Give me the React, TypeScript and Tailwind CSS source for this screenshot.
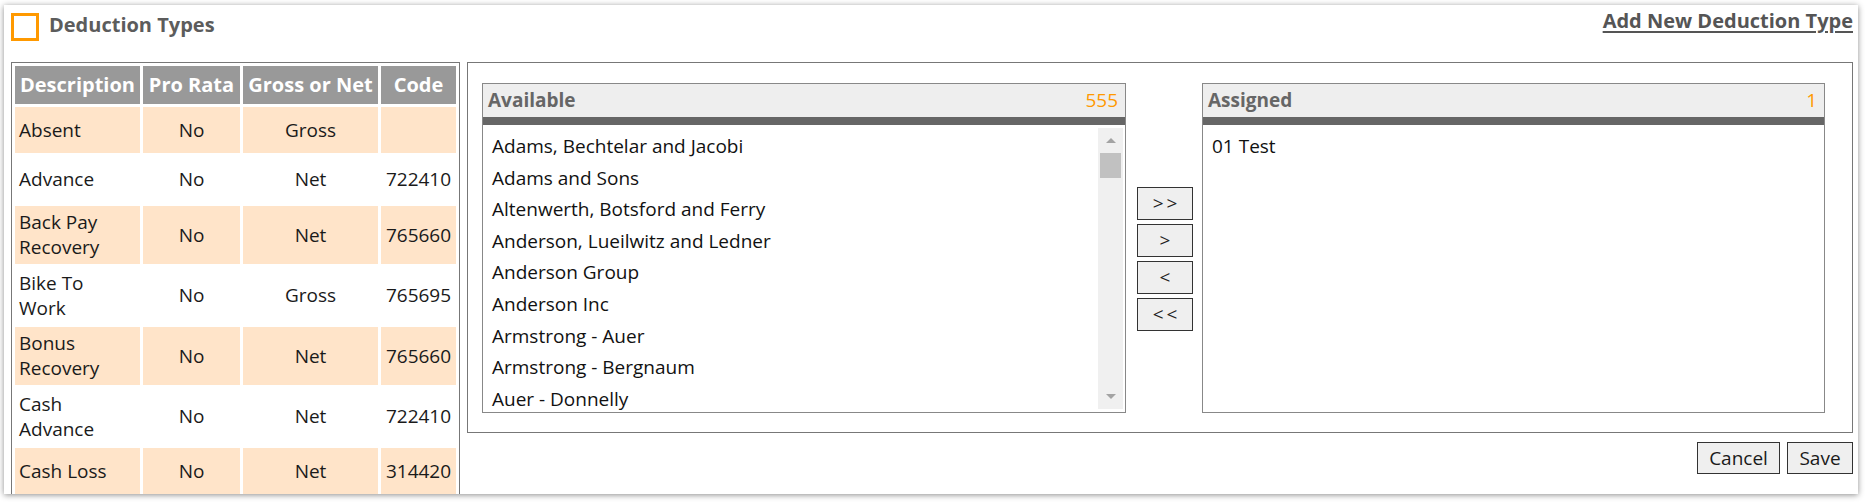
import React from "react";

type Row = {
  d: string[];
  p: string;
  g: string;
  c: string;
  h: string;
  peach: boolean;
};

const rows: Row[] = [
  { d: ["Absent"], p: "No", g: "Gross", c: "", h: "h-[46px]", peach: true },
  { d: ["Advance"], p: "No", g: "Net", c: "722410", h: "h-[47px]", peach: false },
  { d: ["Back Pay", "Recovery"], p: "No", g: "Net", c: "765660", h: "h-[58px]", peach: true },
  { d: ["Bike To", "Work"], p: "No", g: "Gross", c: "765695", h: "h-[57px]", peach: false },
  { d: ["Bonus", "Recovery"], p: "No", g: "Net", c: "765660", h: "h-[58px]", peach: true },
  { d: ["Cash", "Advance"], p: "No", g: "Net", c: "722410", h: "h-[57px]", peach: false },
  { d: ["Cash Loss"], p: "No", g: "Net", c: "314420", h: "h-[46px]", peach: true },
];

const available = [
  "Adams, Bechtelar and Jacobi",
  "Adams and Sons",
  "Altenwerth, Botsford and Ferry",
  "Anderson, Lueilwitz and Ledner",
  "Anderson Group",
  "Anderson Inc",
  "Armstrong - Auer",
  "Armstrong - Bergnaum",
  "Auer - Donnelly",
];

function Tri({ down }: { down?: boolean }) {
  return (
    <svg width="10" height="5" viewBox="0 0 10 5" className="block">
      {down ? <polygon points="0,0 10,0 5,5" fill="#a3a3a3" /> : <polygon points="0,5 10,5 5,0" fill="#a3a3a3" />}
    </svg>
  );
}

function ListBox({
  title,
  count,
  width,
  items,
  scroll,
}: {
  title: string;
  count: string;
  width: string;
  items: string[];
  scroll?: boolean;
}) {
  return (
    <div className={`${width} h-[330px] shrink-0 border border-[#888] flex flex-col bg-white`}>
      <div className="h-[33px] bg-[#eeeeee] flex items-center justify-between pl-[5px] pr-[7px]">
        <span className="text-[19px] font-bold text-[#666666] leading-none">{title}</span>
        <span className="text-[19px] text-[#ff9900] leading-none">{count}</span>
      </div>
      <div className="h-[8px] bg-[#666666]" />
      <div className="flex-1 min-h-0 flex overflow-hidden">
        <div className="flex-1 pl-[9px] pt-[6px] overflow-hidden">
          {items.map((it) => (
            <div key={it} className="text-[19px] leading-[31.6px] text-[#111] whitespace-nowrap">
              {it}
            </div>
          ))}
        </div>
        {scroll && (
          <div className="w-[25px] my-[3px] mr-[2px] bg-[#f0f0f0] flex flex-col items-center">
            <div className="mt-[10px]">
              <Tri />
            </div>
            <div className="mt-[10px] w-[21px] h-[25px] bg-[#c1c1c1]" />
            <div className="flex-1" />
            <div className="mb-[10px]">
              <Tri down />
            </div>
          </div>
        )}
      </div>
    </div>
  );
}

function MoveBtn({ label }: { label: string }) {
  return (
    <div className="h-[33px] w-[56px] border border-[#333] bg-[#efefef] flex items-center justify-center text-[19px] leading-none text-[#222] tracking-[3px] pl-[3px]">
      {label}
    </div>
  );
}

export default function App() {
  return (
    <div className="min-h-[503px] bg-white pl-[4px] pt-[5px] font-['Open_Sans',sans-serif]">
      <div className="w-[1854px] h-[489px] overflow-hidden bg-white shadow-[0_1px_6px_rgba(0,0,0,0.45)] pl-[7px] pr-[5px] pt-[8px]">
        <div className="flex items-start justify-between h-[28px]">
          <div className="flex items-start">
            <div className="w-[28px] h-[28px] border-[3px] border-[#ff9900]" />
            <div className="ml-[10px] mt-[2px] text-[20px] leading-[20px] font-bold text-[#5c5c5c]">
              Deduction Types
            </div>
          </div>
          <a className="-mt-[2px] text-[20px] leading-[20px] font-bold text-[#555] underline underline-offset-[3px] cursor-pointer">
            Add New Deduction Type
          </a>
        </div>

        <div className="mt-[21px] flex items-start gap-[7px]">
          <div className="w-[449px] shrink-0 border border-[#777]">
            <table className="table-fixed w-[447px] border-separate border-spacing-[3px] text-[19px] text-[#1a1a1a]">
              <thead>
                <tr className="h-[38px]">
                  <th className="w-[125px] bg-[#999999] text-white font-bold text-[20px] whitespace-nowrap px-0">Description</th>
                  <th className="w-[97px] bg-[#999999] text-white font-bold text-[20px] whitespace-nowrap px-0">Pro Rata</th>
                  <th className="w-[135px] bg-[#999999] text-white font-bold text-[20px] whitespace-nowrap px-0">Gross or Net</th>
                  <th className="w-[75px] bg-[#999999] text-white font-bold text-[20px] whitespace-nowrap px-0">Code</th>
                </tr>
              </thead>
              <tbody>
                {rows.map((r, i) => {
                  const bg = r.peach ? "bg-[#ffe4c9]" : "bg-white";
                  return (
                    <tr key={i} className={r.h}>
                      <td className={`${bg} px-[4px] leading-[25px] whitespace-nowrap align-middle`}>
                        {r.d.map((l, j) => (
                          <div key={j}>{l}</div>
                        ))}
                      </td>
                      <td className={`${bg} text-center leading-[25px] align-middle`}>{r.p}</td>
                      <td className={`${bg} text-center leading-[25px] align-middle`}>{r.g}</td>
                      <td className={`${bg} text-center leading-[25px] align-middle`}>{r.c}</td>
                    </tr>
                  );
                })}
              </tbody>
            </table>
          </div>

          <div className="flex flex-col items-end">
            <div className="w-[1386px] h-[371px] border border-[#777] pl-[14px] pt-[20px] flex items-start">
              <ListBox title="Available" count="555" width="w-[644px]" items={available} scroll />
              <div className="ml-[11px] mt-[104px] flex flex-col gap-[4px]">
                <MoveBtn label=">>" />
                <MoveBtn label=">" />
                <MoveBtn label="<" />
                <MoveBtn label="<<" />
              </div>
              <div className="ml-[9px]">
                <ListBox title="Assigned" count="1" width="w-[623px]" items={["01 Test"]} />
              </div>
            </div>
            <div className="mt-[9px] flex gap-[7px]">
              <div className="h-[32px] w-[83px] border border-[#333] bg-[#efefef] flex items-center justify-center text-[19px] leading-none text-[#1a1a1a]">
                Cancel
              </div>
              <div className="h-[32px] w-[66px] border border-[#333] bg-[#efefef] flex items-center justify-center text-[19px] leading-none text-[#1a1a1a]">
                Save
              </div>
            </div>
          </div>
        </div>
      </div>
    </div>
  );
}
